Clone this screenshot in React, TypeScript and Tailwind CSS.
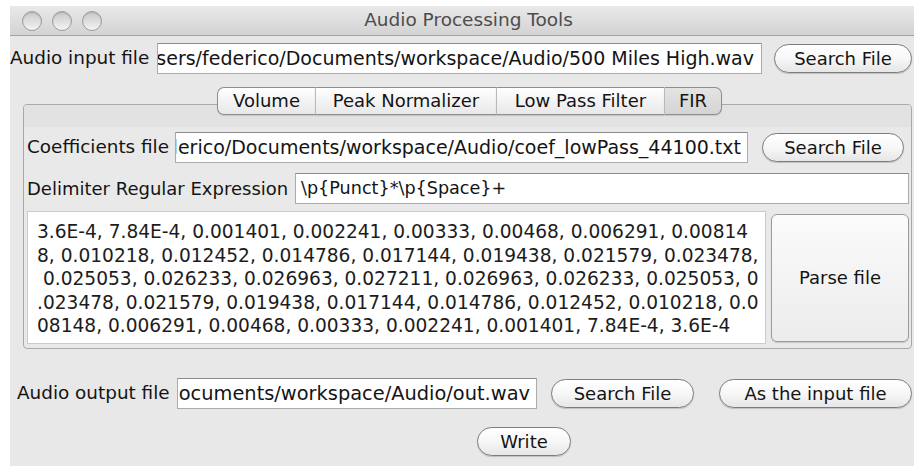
import React from "react";

const FONT = { fontFamily: '"DejaVu Sans", "Liberation Sans", sans-serif' };

function TrafficLight() {
  return (
    <div className="w-[20px] h-[20px] rounded-full border border-[#9c9c9c] bg-gradient-to-b from-[#c9c9c9] via-[#dedede] to-[#f4f4f4] shadow-[inset_0_1px_1px_rgba(0,0,0,0.15)]" />
  );
}

function PillButton({ label, w }: { label: string; w: string }) {
  return (
    <button
      className={`${w} h-[29px] shrink-0 rounded-full border border-[#7c7c7c] bg-gradient-to-b from-[#ffffff] via-[#f7f7f7] to-[#e6e6e6] text-[18px] leading-none text-[#141414] shadow-[0_1px_1px_rgba(0,0,0,0.18)] flex items-center justify-center`}
    >
      {label}
    </button>
  );
}

function PathField({ value, w, pr, size }: { value: string; w: string; pr: string; size: string }) {
  // the field is scrolled to the end of the path, so its start is clipped on the left
  return (
    <div
      className={`${w} h-[31px] shrink-0 bg-white border border-[#ababab] border-t-[#8c8c8c] overflow-hidden flex items-center justify-end ${pr}`}
    >
      <span className={`whitespace-nowrap ${size} leading-none text-[#141414]`}>{value}</span>
    </div>
  );
}

const coefLines = [
  "3.6E-4, 7.84E-4, 0.001401, 0.002241, 0.00333, 0.00468, 0.006291, 0.00814",
  "8, 0.010218, 0.012452, 0.014786, 0.017144, 0.019438, 0.021579, 0.023478,",
  " 0.025053, 0.026233, 0.026963, 0.027211, 0.026963, 0.026233, 0.025053, 0",
  ".023478, 0.021579, 0.019438, 0.017144, 0.014786, 0.012452, 0.010218, 0.0",
  "08148, 0.006291, 0.00468, 0.00333, 0.002241, 0.001401, 7.84E-4, 3.6E-4",
];

const tabs = [
  { label: "Volume", w: "w-[98px]" },
  { label: "Peak Normalizer", w: "w-[181px]" },
  { label: "Low Pass Filter", w: "w-[168px]" },
  { label: "FIR", w: "w-[58px]" },
];

export default function App() {
  return (
    <div className="w-[914px] h-[466px] bg-white pl-[10px] pt-[6px] overflow-hidden" style={FONT}>
      <div className="w-[904px] h-[460px] bg-[#e8e8e8] flex flex-col text-[#141414]">
        {/* title bar */}
        <div className="h-[30px] shrink-0 grid grid-cols-[110px_1fr_97px] items-center bg-gradient-to-b from-[#e9e9e9] to-[#d3d3d3] border-b border-[#a2a2a2]">
          <div className="flex items-center gap-[10px] pl-[12px]">
            <TrafficLight />
            <TrafficLight />
            <TrafficLight />
          </div>
          <div className="text-center text-[18.5px] leading-none text-[#4d4d4d]">Audio Processing Tools</div>
          <div />
        </div>

        {/* audio input row */}
        <div className="mt-[7px] flex items-center">
          <div className="w-[147px] shrink-0 text-[18.4px] leading-none whitespace-nowrap">Audio input file</div>
          <PathField
            value="/Users/federico/Documents/workspace/Audio/500 Miles High.wav"
            w="w-[605px]"
            pr="pr-[7px]"
            size="text-[19px]"
          />
          <div className="ml-[12px]">
            <PillButton label="Search File" w="w-[138px]" />
          </div>
        </div>

        {/* tabbed pane */}
        <div className="mt-[13px] ml-[13px] w-[889px] flex flex-col">
          <div className="relative z-10 h-[28px] flex pl-[194px]">
            {tabs.map((t, i) => {
              const first = i === 0;
              const last = i === tabs.length - 1;
              const selected = t.label === "FIR";
              return (
                <div
                  key={t.label}
                  className={`${t.w} h-[28px] flex items-center justify-center text-[18px] leading-none border-y border-[#8f8f8f] ${
                    first ? "border-l rounded-l-[7px]" : "border-l border-l-[#b9b9b9]"
                  } ${last ? "border-r rounded-r-[7px]" : ""} ${
                    selected
                      ? "bg-gradient-to-b from-[#e4e4e4] to-[#d4d4d4]"
                      : "bg-gradient-to-b from-[#ffffff] to-[#e8e8e8]"
                  } shadow-[0_1px_1px_rgba(0,0,0,0.12)]`}
                >
                  {t.label}
                </div>
              );
            })}
          </div>
          <div className="-mt-[11px] h-[245px] border border-[#a9a9a9] rounded-[4px] flex flex-col bg-[#e9e9e9] overflow-hidden">
            <div className="h-[22px] shrink-0 bg-[#e2e2e2]" />
            <div className="pl-[3px] flex flex-col">
              {/* coefficients row */}
              <div className="mt-[5px] flex items-center">
                <div className="w-[148px] shrink-0 text-[18.4px] leading-none whitespace-nowrap">Coefficients file</div>
                <PathField
                  value="/Users/federico/Documents/workspace/Audio/coef_lowPass_44100.txt"
                  w="w-[573px]"
                  pr="pr-[6px]"
                  size="text-[19px]"
                />
                <div className="ml-[14px]">
                  <PillButton label="Search File" w="w-[142px]" />
                </div>
              </div>

              {/* delimiter row */}
              <div className="mt-[10px] flex items-center">
                <div className="w-[268px] shrink-0 text-[18px] leading-none whitespace-nowrap">
                  Delimiter Regular Expression
                </div>
                <div className="w-[614px] h-[31px] bg-white border border-[#ababab] border-t-[#8c8c8c] flex items-center pl-[5px]">
                  <span className="text-[17.6px] leading-none whitespace-nowrap">{"\\p{Punct}*\\p{Space}+"}</span>
                </div>
              </div>

              {/* coefficients list + parse */}
              <div className="mt-[7px] flex items-start">
                <div className="w-[739px] h-[133px] shrink-0 bg-white border border-[#cbcbcb] pl-[9px] pt-[8px] overflow-hidden">
                  {coefLines.map((l, i) => (
                    <div key={i} className="whitespace-pre text-[18.6px] leading-[23.5px] text-[#1c1c1c]">
                      {l}
                    </div>
                  ))}
                </div>
                <button className="ml-[5px] mt-[3px] w-[138px] h-[128px] shrink-0 rounded-[6px] border border-[#9b9b9b] bg-gradient-to-b from-[#fbfbfb] to-[#ececec] shadow-[0_1px_1px_rgba(0,0,0,0.15)] text-[18px] leading-none flex items-center justify-center">
                  Parse file
                </button>
              </div>
            </div>
          </div>
        </div>

        {/* output row */}
        <div className="mt-[29px] ml-[7px] flex items-center">
          <div className="w-[160px] shrink-0 text-[18.4px] leading-none whitespace-nowrap">Audio output file</div>
          <PathField
            value="/Users/federico/Documents/workspace/Audio/out.wav"
            w="w-[360px]"
            pr="pr-[6px]"
            size="text-[19.4px]"
          />
          <div className="ml-[14px]">
            <PillButton label="Search File" w="w-[143px]" />
          </div>
          <div className="ml-[25px]">
            <PillButton label="As the input file" w="w-[193px]" />
          </div>
        </div>

        {/* write */}
        <div className="mt-[18px] pl-[467px] flex">
          <PillButton label="Write" w="w-[94px]" />
        </div>
      </div>
    </div>
  );
}
